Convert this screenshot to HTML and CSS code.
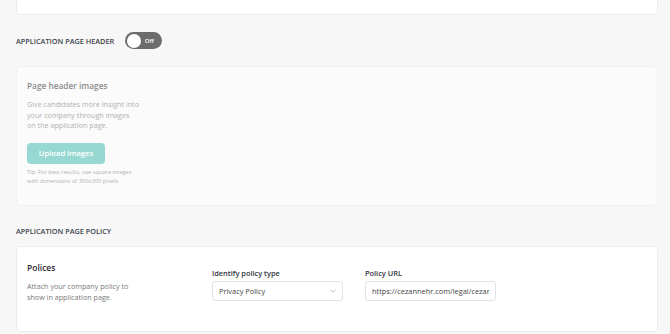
FILE: index.html
```html
<!DOCTYPE html>
<html>
<head>
<meta charset="utf-8">
<link rel="stylesheet" href="styles.css">
</head>
<body>
<div class="page">
  <div class="card card-top"></div>

  <div class="section-head">
    <span class="section-title">APPLICATION PAGE HEADER</span>
    <span class="toggle"><span class="knob"></span><span class="toggle-label">Off</span></span>
  </div>

  <div class="card card-faded">
    <div class="faded-title">Page header images</div>
    <p class="faded-desc">Give candidates more insight into<br>your company through images<br>on the application page.</p>
    <button class="upload-btn" type="button">Upload images</button>
    <p class="tip">Tip: For best results, use square images<br>with dimensions of 300x300 pixels.</p>
  </div>

  <div class="section-head section-head-policy">
    <span class="section-title">APPLICATION PAGE POLICY</span>
  </div>

  <div class="card card-policy">
    <div class="policy-info">
      <div class="policy-title">Polices</div>
      <p class="policy-desc">Attach your company policy to<br>show in application page.</p>
    </div>
    <div class="field">
      <label class="field-label">Identify policy type</label>
      <div class="select">
        <span>Privacy Policy</span>
        <svg class="chev" width="6" height="4" viewBox="0 0 6 4"><path d="M0.5 0.7 L3 3.2 L5.5 0.7" fill="none" stroke="#b8b8b8" stroke-width="0.9"/></svg>
      </div>
    </div>
    <div class="field">
      <label class="field-label">Policy URL</label>
      <input class="input" type="text" value="https://cezannehr.com/legal/cezanne-hr-privacy-policy">
    </div>
  </div>
</div>
</body>
</html>
```

FILE: styles.css
```css
* { box-sizing: border-box; }
html, body {
  margin: 0;
  padding: 0;
  background: #f7f7f7;
  font-family: "Open Sans", "Noto Sans", sans-serif;
  overflow: hidden;
}
.page {
  padding: 0 12px 0 16px;
  height: 334px;
}
.card {
  background: #fff;
  border: 1px solid #ececef;
  border-radius: 5px;
}
.card-top {
  height: 15px;
  border-top: none;
  border-radius: 0 0 5px 5px;
}
.section-head {
  display: flex;
  align-items: center;
  gap: 10px;
  height: 17px;
  margin-top: 17px;
}
.section-title {
  font-size: 7.3px;
  font-weight: 600;
  color: #3e3f4d;
}
.toggle {
  width: 37px;
  height: 17px;
  border-radius: 9px;
  background: #6c6c6c;
  display: flex;
  align-items: center;
  margin-left: 1px;
}
.knob {
  width: 14px;
  height: 14px;
  border-radius: 50%;
  background: #fff;
  margin-left: 1.5px;
}
.toggle-label {
  font-size: 6px;
  font-weight: 600;
  color: #fff;
  margin-left: 4px;
}
.card-faded {
  margin-top: 17px;
  height: 140px;
  background: #fbfbfb;
  border-color: #f2f2f3;
  padding: 13px 10px 0;
}
.faded-title {
  font-size: 8.3px;
  font-weight: 600;
  line-height: 12px;
  color: #8c8c8c;
}
.faded-desc {
  margin: 7px 0 0;
  font-size: 7.2px;
  line-height: 10.5px;
  color: #b1b1b1;
}
.upload-btn {
  display: block;
  margin-top: 12px;
  width: 78px;
  height: 21px;
  border: none;
  border-radius: 4px;
  background: #97d8d3;
  color: #fff;
  font-family: inherit;
  font-size: 7.6px;
  font-weight: 600;
  padding: 0;
}
.tip {
  margin: 4px 0 0;
  font-size: 5.7px;
  line-height: 9px;
  color: #b2b2b2;
}
.section-head-policy {
  margin-top: 19px;
  height: 12px;
}
.card-policy {
  margin-top: 9px;
  height: 86px;
  display: grid;
  grid-template-columns: 163px 131px 131px;
  column-gap: 22px;
  padding: 15px 10px 0;
  align-items: start;
}
.policy-title {
  font-size: 8.5px;
  font-weight: 600;
  line-height: 12px;
  color: #2a2a33;
}
.policy-desc {
  margin: 7px 0 0;
  font-size: 7.2px;
  line-height: 11px;
  color: #7a7a7a;
}
.field {
  margin-top: 5px;
  display: flex;
  flex-direction: column;
}
.field-label {
  font-size: 7.4px;
  font-weight: 600;
  line-height: 12px;
  color: #33333d;
  margin-bottom: 2px;
}
.select, .input {
  height: 20px;
  width: 131px;
  border: 1px solid #e3e3e6;
  border-radius: 3px;
  background: #fff;
  padding: 0 6px;
  font-family: inherit;
  font-size: 7.4px;
  color: #454545;
  outline: none;
}
.select {
  display: flex;
  align-items: center;
  justify-content: space-between;
  white-space: nowrap;
}
```
